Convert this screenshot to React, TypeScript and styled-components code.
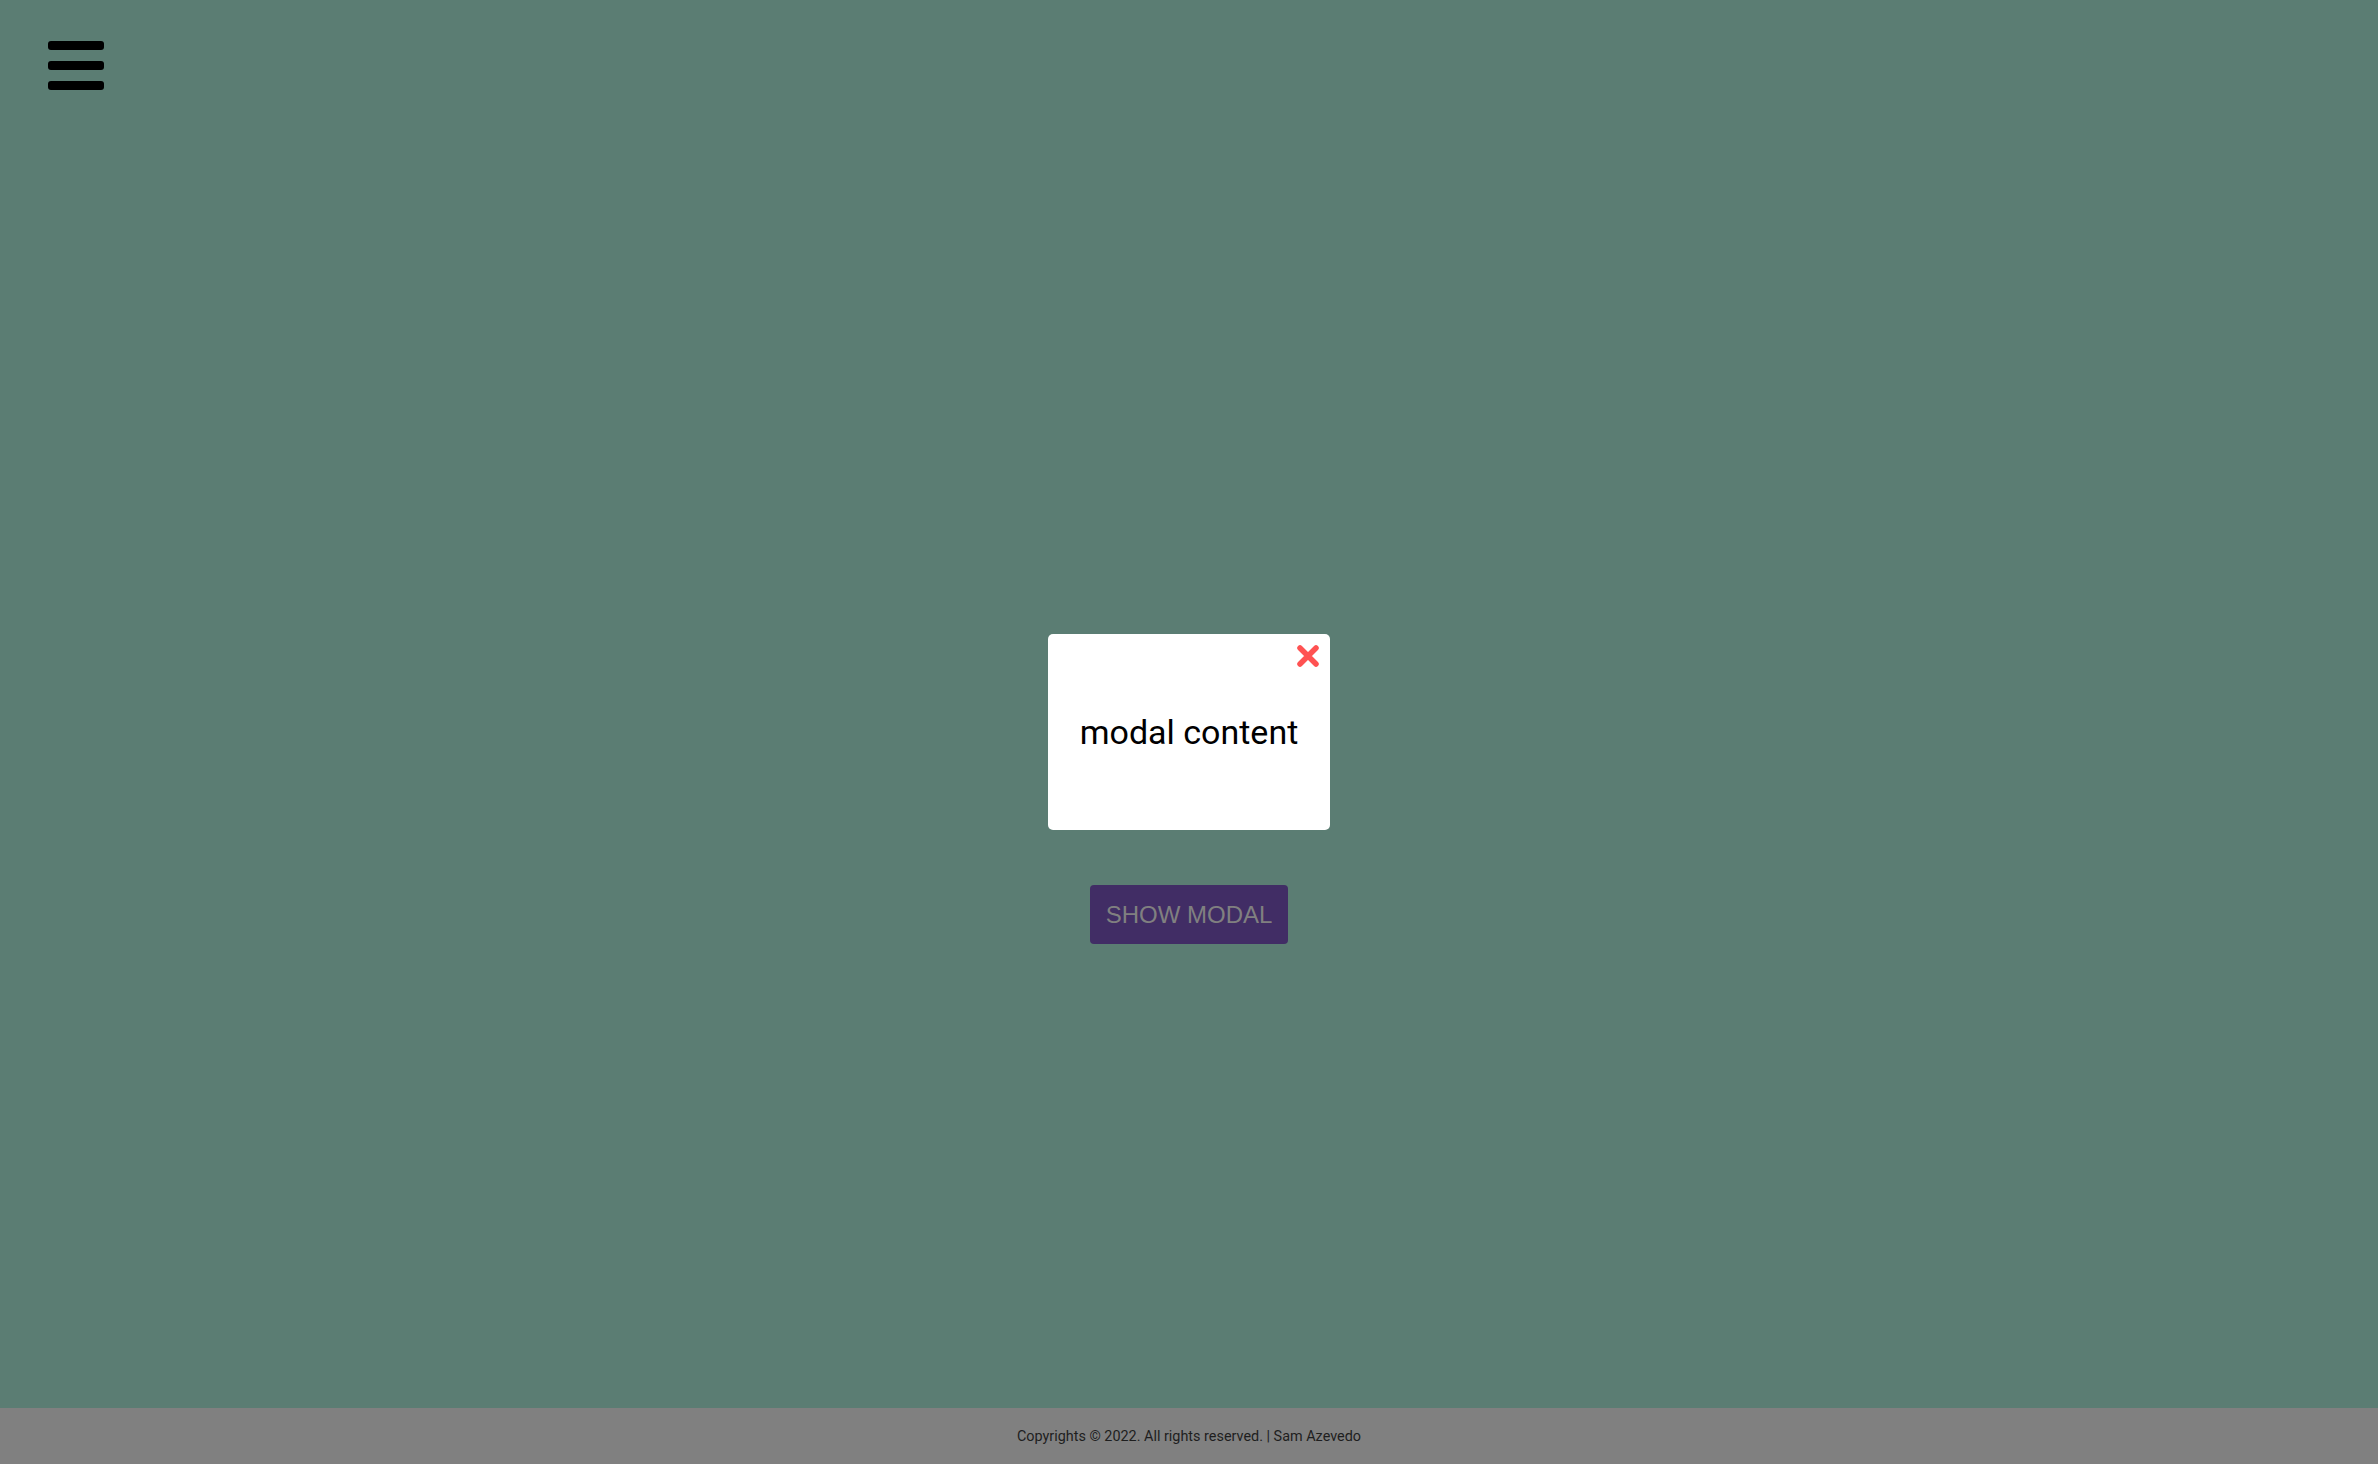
import React from "react";
import styled, { createGlobalStyle } from "styled-components";

const Global = createGlobalStyle`
  html, body { margin: 0; padding: 0; }
  body { background: #5b7d73; font-family: Roboto, "Liberation Sans", sans-serif; }
  #root { min-height: 100vh; }
`;

const Page = styled.div`
  display: flex;
  flex-direction: column;
  height: 1464px;
  background: #5b7d73;
`;

const Header = styled.header`
  display: flex;
  align-items: flex-start;
  padding: 41px 0 0 48px;
`;

const Burger = styled.button`
  display: flex;
  flex-direction: column;
  gap: 11px;
  padding: 0;
  border: 0;
  background: transparent;
  cursor: pointer;
`;

const Bar = styled.span`
  display: block;
  flex: none;
  width: 56px;
  height: 9px;
  border-radius: 3px;
  background: #000;
`;

const Main = styled.main`
  flex: 1;
  display: flex;
  flex-direction: column;
  align-items: center;
  padding-top: 544px;
  gap: 55px;
`;

const Modal = styled.div`
  position: relative;
  width: 282px;
  height: 196px;
  box-sizing: border-box;
  background: #fff;
  border-radius: 5px;
  display: flex;
  justify-content: center;
  padding-top: 78px;
`;

const ModalText = styled.p`
  margin: 0;
  font-family: Roboto, "Liberation Sans", sans-serif;
  font-size: 34px;
  font-weight: 400;
  line-height: 40px;
  color: #000;
`;

const Close = styled.button`
  position: absolute;
  top: 10px;
  right: 10px;
  width: 24px;
  height: 24px;
  padding: 0;
  border: 0;
  background: transparent;
  display: flex;
  cursor: pointer;
`;

const ShowButton = styled.button`
  width: 198px;
  height: 59px;
  border: 0;
  border-radius: 4px;
  background: #412d65;
  color: #808080;
  font-family: "Liberation Sans", Arial, sans-serif;
  font-size: 24px;
  padding: 0;
  cursor: pointer;
`;

const Footer = styled.footer`
  height: 56px;
  background: #808080;
  display: flex;
  align-items: center;
  justify-content: center;
  font-family: Roboto, "Liberation Sans", sans-serif;
  font-size: 14.4px;
  color: #1e1e1e;
`;

export default function App() {
  return (
    <>
      <Global />
      <Page>
        <Header>
          <Burger aria-label="menu">
            <Bar />
            <Bar />
            <Bar />
          </Burger>
        </Header>
        <Main>
          <Modal>
            <Close aria-label="close">
              <svg width="24" height="24" viewBox="0 0 24 24">
                <path d="M4 4 L20 20 M20 4 L4 20" stroke="#ff5252" strokeWidth="5.5" strokeLinecap="round" />
              </svg>
            </Close>
            <ModalText>modal content</ModalText>
          </Modal>
          <ShowButton>SHOW MODAL</ShowButton>
        </Main>
        <Footer>Copyrights © 2022. All rights reserved. | Sam Azevedo</Footer>
      </Page>
    </>
  );
}
